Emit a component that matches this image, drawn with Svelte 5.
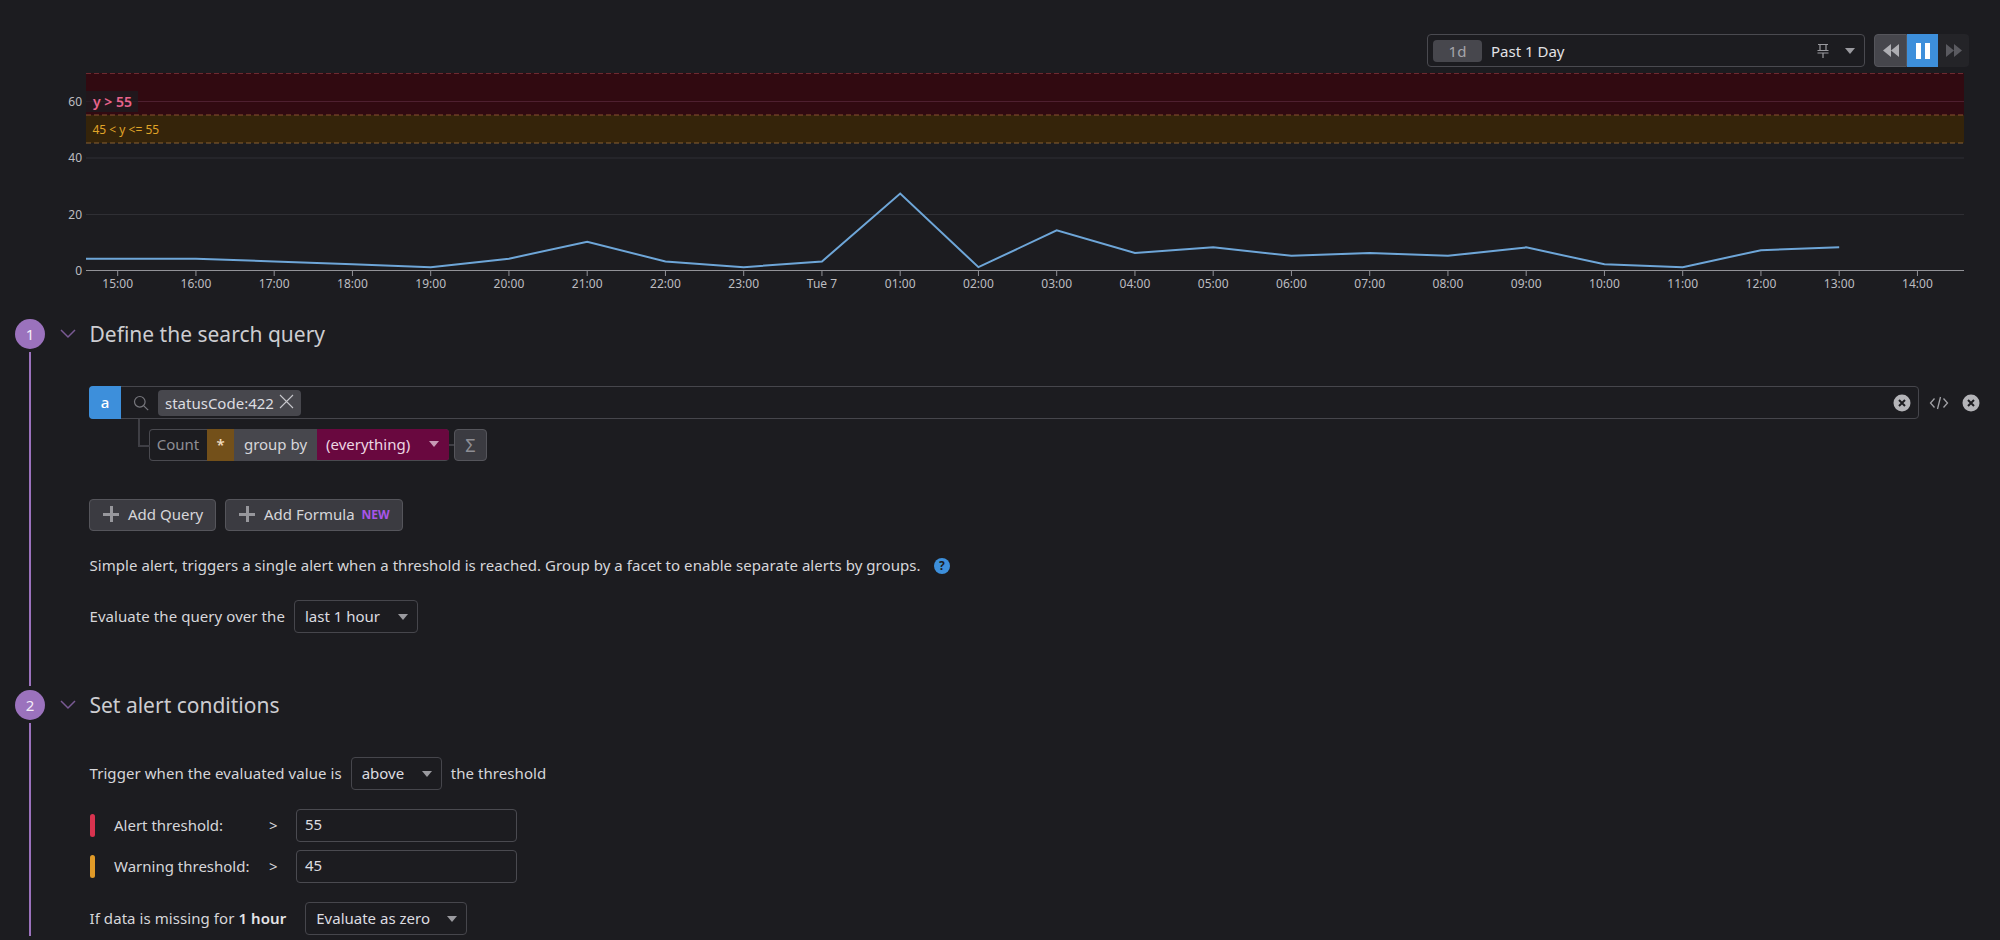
<script>
  const hours = ['15:00','16:00','17:00','18:00','19:00','20:00','21:00','22:00','23:00','Tue 7','01:00','02:00','03:00','04:00','05:00','06:00','07:00','08:00','09:00','10:00','11:00','12:00','13:00','14:00'];
  const values = [4,4,3,2,1,4,10,3,1,3,27,1,14,6,8,5,6,5,8,2,1,7,8];
  const tickX = (i) => 117.7 + i * 78.25;
  const valY = (v) => 270 - v * 2.83;
  const linePoints = `86,${valY(4)} ` + values.map((v, i) => `${tickX(i)},${valY(v)}`).join(' ');
  const grid = [[60, 101.5], [40, 158], [20, 214.5]];
</script>

<div class="page">
  <header class="toolbar">
    <div class="picker">
      <span class="badge">1d</span>
      <span class="range">Past 1 Day</span>
      <svg class="pin" width="14" height="16" viewBox="0 0 14 16" fill="none" stroke="#9a9a9f" stroke-width="1.2"><path d="M2 1.5h10M4 1.5v6M10 1.5v6M1.5 7.5h11M1.5 10h11M7 10v5"/></svg>
      <span class="caret"></span>
    </div>
    <div class="player">
      <button class="pbtn back" aria-label="Back"><svg width="18" height="15" viewBox="0 0 18 15" fill="#aeaeb3"><path d="M9 1v13L1 7.5zM17 1v13L9 7.5z"/></svg></button>
      <button class="pbtn pause" aria-label="Pause"><svg width="14" height="16" viewBox="0 0 14 16" fill="#fff"><rect x="0" y="0" width="5" height="16"/><rect x="9" y="0" width="5" height="16"/></svg></button>
      <button class="pbtn next" aria-label="Forward"><svg width="18" height="15" viewBox="0 0 18 15" fill="#5a5a60"><path d="M1 1v13l8-6.5zM9 1v13l8-6.5z"/></svg></button>
    </div>
  </header>

  <svg class="chart" width="2000" height="249" viewBox="0 70 2000 249">
    <rect x="86" y="73" width="1878" height="42" fill="#310a11"/>
    <rect x="86" y="115" width="1878" height="28" fill="#35240a"/>
    {#each grid as [label, y]}
      <line x1="86" x2="1964" y1={y} y2={y} stroke={label === 60 ? '#4e2030' : '#2f2f34'}/>
      <text class="tick" x="82" y={y + 4} text-anchor="end">{label}</text>
    {/each}
    <line x1="86" x2="1964" y1="73.5" y2="73.5" stroke="#6e2a30" stroke-dasharray="5 3"/>
    <line x1="86" x2="1964" y1="115" y2="115" stroke="#8a5030" stroke-dasharray="5 3"/>
    <line x1="86" x2="1964" y1="143" y2="143" stroke="#8a6030" stroke-dasharray="5 3"/>
    <rect x="86" y="91" width="52" height="21" fill="#1c1c20" opacity="0.75"/>
    <text class="alert-label" x="93" y="107">y &gt; 55</text>
    <text class="warn-label" x="92.5" y="134">45 &lt; y &lt;= 55</text>
    <polyline points={linePoints} fill="none" stroke="#6ea6d8" stroke-width="2"/>
    <line x1="86" x2="1964" y1="270.5" y2="270.5" stroke="#929297"/>
    <text class="tick" x="82" y="275" text-anchor="end">0</text>
    {#each hours as hour, i}
      <line x1={tickX(i)} x2={tickX(i)} y1="270" y2="276" stroke="#929297"/>
      <text class="tick" x={tickX(i)} y="288" text-anchor="middle">{hour}</text>
    {/each}
  </svg>

  <section class="step one">
    <div class="rail"><span class="num">1</span><span class="line"></span></div>
    <div class="content">
      <h2 class="title">
        <svg class="chev" width="16" height="10" viewBox="0 0 16 10" fill="none" stroke="#7a5a94" stroke-width="1.5"><path d="M1 1l7 7 7-7"/></svg>
        Define the search query
      </h2>

      <div class="query-row">
        <div class="query">
          <span class="letter">a</span>
          <svg class="search" width="16" height="16" viewBox="0 0 16 16" fill="none" stroke="#77777d" stroke-width="1.2"><circle cx="6.8" cy="6.8" r="5.3"/><path d="M10.8 10.8l4.4 4.4"/></svg>
          <span class="chip">statusCode:422
            <svg width="15" height="15" viewBox="0 0 15 15" stroke="#c7c7cc" stroke-width="1.1"><path d="M1 1l13 13M14 1L1 14"/></svg>
          </span>
          <svg class="clear" width="18" height="18" viewBox="0 0 18 18"><circle cx="9" cy="9" r="8.5" fill="#b4b4b8"/><path d="M6 6l6 6M12 6l-6 6" stroke="#1c1c20" stroke-width="2"/></svg>
        </div>
        <svg class="code" width="20" height="14" viewBox="0 0 20 14" fill="none" stroke="#a2a2a7" stroke-width="1.3"><path d="M5.5 2.5L1.5 7l4 4.5M14.5 2.5l4 4.5-4 4.5M11.5 1l-3 12"/></svg>
        <svg class="remove" width="18" height="18" viewBox="0 0 18 18"><circle cx="9" cy="9" r="8.5" fill="#b4b4b8"/><path d="M6 6l6 6M12 6l-6 6" stroke="#1c1c20" stroke-width="2"/></svg>
      </div>

      <div class="agg-row">
        <span class="connector"></span>
        <div class="agg">
          <span class="seg count">Count</span>
          <span class="seg star">*</span>
          <span class="seg group">group by</span>
          <span class="seg every">(everything)<span class="caret light"></span></span>
        </div>
        <span class="dash"></span>
        <span class="sigma">Σ</span>
      </div>

      <div class="buttons">
        <button class="btn"><span class="plus"></span>Add Query</button>
        <button class="btn"><span class="plus"></span>Add Formula<em>NEW</em></button>
      </div>

      <p class="note">Simple alert, triggers a single alert when a threshold is reached. Group by a facet to enable separate alerts by groups.
        <svg width="16" height="16" viewBox="0 0 16 16"><circle cx="8" cy="8" r="8" fill="#3d8fdb"/><text x="8" y="12.2" text-anchor="middle" class="q">?</text></svg>
      </p>

      <div class="inline evaluate">
        <span>Evaluate the query over the</span>
        <span class="select w-hour">last 1 hour<span class="caret"></span></span>
      </div>
    </div>
  </section>

  <section class="step two">
    <div class="rail"><span class="num">2</span><span class="line"></span></div>
    <div class="content">
      <h2 class="title">
        <svg class="chev" width="16" height="10" viewBox="0 0 16 10" fill="none" stroke="#7a5a94" stroke-width="1.5"><path d="M1 1l7 7 7-7"/></svg>
        Set alert conditions
      </h2>

      <div class="inline trigger">
        <span>Trigger when the evaluated value is</span>
        <span class="select w-above">above<span class="caret"></span></span>
        <span>the threshold</span>
      </div>

      <div class="threshold first">
        <span class="mark red"></span>
        <span class="tlabel">Alert threshold:</span>
        <span class="gt">&gt;</span>
        <span class="input">55</span>
      </div>
      <div class="threshold">
        <span class="mark amber"></span>
        <span class="tlabel">Warning threshold:</span>
        <span class="gt">&gt;</span>
        <span class="input">45</span>
      </div>

      <div class="inline missing">
        <span>If data is missing for <b>1 hour</b></span>
        <span class="select w-zero">Evaluate as zero<span class="caret"></span></span>
      </div>
    </div>
  </section>
</div>

<style>
  :global(body) { margin: 0; background: #1c1c20; }
  .page {
    width: 2000px; height: 940px; overflow: hidden; background: #1c1c20;
    font-family: "Noto Sans", sans-serif; font-size: 15px; color: #cfcfd3;
  }
  .toolbar { display: flex; justify-content: flex-end; gap: 9px; padding: 34px 31px 0 0; height: 33px; }
  .picker {
    width: 438px; box-sizing: border-box; height: 33px; display: flex; align-items: center;
    border: 1px solid #4a4a50; border-radius: 4px; padding: 0 9px 0 5px; background: #1c1c20;
  }
  .badge { width: 49px; height: 22px; line-height: 22px; text-align: center; background: #47474d; border-radius: 4px; color: #a5a5aa; font-size: 15px; }
  .range { margin-left: 9px; flex: 1; color: #e2e2e5; font-size: 15px; }
  .pin { margin-right: 15px; }
  .caret { display: inline-block; width: 0; height: 0; border-left: 5.5px solid transparent; border-right: 5.5px solid transparent; border-top: 6px solid #9a9a9f; }
  .caret.light { border-top-color: #c79ab5; margin-left: 19px; }
  .player { display: flex; width: 95px; height: 33px; }
  .pbtn { flex: 1; padding: 0; border: 0; display: flex; align-items: center; justify-content: center; }
  .back { background: #46464c; border-radius: 4px 0 0 4px; border: 1px solid #55555b; }
  .pause { background: #3d8fdb; }
  .next { background: #242428; border-radius: 0 4px 4px 0; }
  .chart { display: block; margin-top: 3px; }
  .tick { font-size: 12px; fill: #bcbcc0; }
  .alert-label { font-size: 14px; font-weight: 600; fill: #e8648c; }
  .warn-label { font-size: 12px; fill: #e0a528; }

  .step { display: flex; }
  .step.one { height: 371px; }
  .step.two { height: 250px; }
  .rail { width: 60px; flex: none; display: flex; flex-direction: column; align-items: center; }
  .num { width: 30px; height: 30px; border-radius: 50%; background: #9b72bd; color: #f4eef8; text-align: center; line-height: 30px; font-size: 15px; }
  .line { flex: 1; width: 2px; margin: 3px 0 4px; background: #9b72bd; }
  .content { flex: 1; min-width: 0; position: relative; }
  .title { position: relative; margin: 0 0 0 29.5px; height: 30px; line-height: 30px; font-size: 21px; font-weight: 400; color: #cdcdd1; }
  .chev { position: absolute; left: -29.5px; top: 10px; }

  .query-row { display: flex; align-items: center; margin: 37px 0 0 29px; height: 33px; }
  .query {
    width: 1830px; box-sizing: border-box; height: 33px; flex: none; display: flex; align-items: center;
    border: 1px solid #46464c; border-radius: 4px;
  }
  .letter { width: 32px; height: 33px; margin: -1px 0 -1px -1px; background: #3d8fdb; color: #fff; border-radius: 4px 0 0 4px; text-align: center; line-height: 33px; font-weight: 500; font-size: 15px; }
  .search { margin-left: 12px; }
  .chip { margin-left: 9px; height: 26px; width: 143px; box-sizing: border-box; padding-left: 7px; display: flex; align-items: center; gap: 5px; background: #47474d; border-radius: 4px; color: #dcdce0; white-space: nowrap; }
  .chip svg { margin-top: -3px; }
  .clear { margin-left: auto; margin-right: 7px; }
  .code { margin-left: 10px; }
  .remove { margin-left: 13px; }

  .agg-row { position: relative; display: flex; align-items: center; margin: 10px 0 0 89px; height: 32px; }
  .connector { position: absolute; left: -11px; top: -10px; width: 10px; height: 26px; border-left: 2px solid #3f3f45; border-bottom: 2px solid #3f3f45; }
  .agg { display: flex; height: 32px; box-sizing: border-box; border-radius: 4px; overflow: hidden; box-shadow: inset 0 0 0 1px #4a4a50; }
  .seg { display: flex; align-items: center; justify-content: center; height: 32px; box-sizing: border-box; padding-bottom: 2px; }
  .count { width: 58px; color: #8e8e94; }
  .star { width: 27px; background: #73501a; color: #f0dcc0; font-weight: 600; }
  .group { width: 83px; background: #47474d; color: #d6d6da; }
  .every { width: 132px; background: #69083f; color: #ecd7e3; height: 31px; justify-content: flex-start; padding-left: 9px; }
  .dash { width: 5px; height: 2px; background: #3f3f45; }
  .sigma { width: 33px; height: 32px; box-sizing: border-box; border: 1px solid #55555b; border-radius: 4px; background: #3b3b41; color: #8e8e94; text-align: center; line-height: 30px; font-size: 18px; }

  .buttons { display: flex; gap: 9px; margin: 38px 0 0 29px; }
  .btn {
    display: flex; align-items: center; height: 32px; padding: 0 10px 2px 13px; box-sizing: border-box;
    background: #3b3b41; border: 1px solid #55555b; border-radius: 4px; color: #d6d6da;
    font: 15px "Noto Sans", sans-serif;
  }
  .btn:first-child { width: 127px; }
  .btn:last-child { width: 178px; }
  .plus { position: relative; width: 16px; height: 16px; margin-right: 9px; background: linear-gradient(#97979c, #97979c) center / 16px 3px no-repeat, linear-gradient(#97979c, #97979c) center / 3px 16px no-repeat; }
  .btn em { margin-left: 7px; font-style: normal; font-weight: 700; font-size: 12px; color: #a855e8; }

  .note { display: flex; align-items: center; gap: 13px; margin: 23px 0 0 29.5px; height: 22px; line-height: 22px; color: #d6d6da; white-space: nowrap; letter-spacing: 0.05px; }
  .note svg { margin-top: 2px; }
  .q { font-size: 12px; font-weight: 700; fill: #1c1c20; }

  .inline { display: flex; align-items: center; gap: 9px; margin-left: 29.5px; color: #d6d6da; white-space: nowrap; }
  .inline > span:not(.select) { padding-bottom: 2px; letter-spacing: 0.07px; }
  .evaluate { margin-top: 24px; }
  .select {
    display: flex; align-items: center; justify-content: space-between; height: 33px; box-sizing: border-box;
    border: 1px solid #46464c; border-radius: 4px; padding: 0 9px 2px 10px; color: #dcdce0;
  }
  .select .caret { margin-top: 3px; }
  .w-hour { width: 124px; }
  .w-above { width: 91px; }
  .w-zero { width: 162px; margin-left: 10px; }

  .trigger { margin-top: 37px; }
  .threshold { display: flex; align-items: center; height: 33px; margin: 8px 0 0 30px; color: #d6d6da; }
  .threshold.first { margin-top: 19px; }
  .threshold span:not(.mark, .input) { padding-bottom: 2px; }
  .mark { width: 5px; height: 23px; border-radius: 3px; }
  .red { background: #d8334f; }
  .amber { background: #e09a28; }
  .tlabel { width: 155px; margin-left: 19px; white-space: nowrap; }
  .gt { width: 27px; }
  .input { width: 221px; height: 33px; box-sizing: border-box; border: 1px solid #4a4a50; border-radius: 4px; padding: 0 8px; line-height: 29px; color: #dcdce0; }
  .missing { margin-top: 19px; }
  .missing b { font-weight: 600; color: #e4e4e7; }
</style>
